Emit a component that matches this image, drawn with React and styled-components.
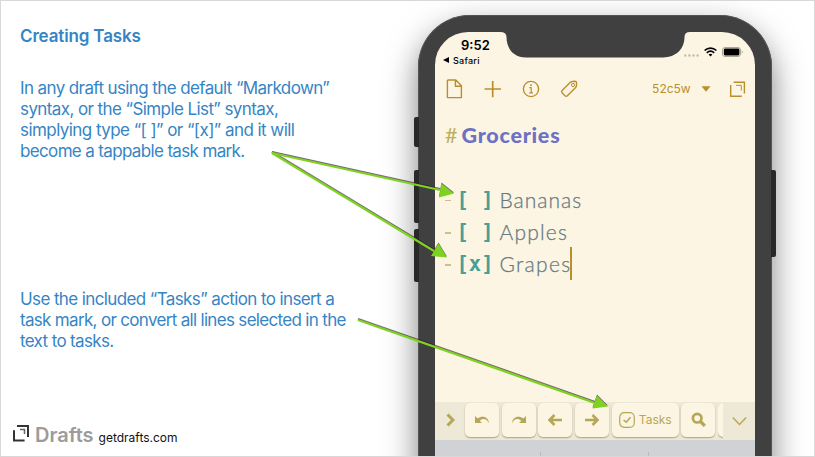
import React from 'react';
import styled, { createGlobalStyle } from 'styled-components';

const GlobalStyle = createGlobalStyle`
  * { box-sizing: border-box; }
  body { margin: 0; background: #fff; }
`;

const Slide = styled.main`
  position: relative;
  display: grid;
  grid-template-columns: 417px 353.6px;
  grid-template-rows: 455px;
  width: 815px;
  height: 457px;
  overflow: hidden;
  border: 1px solid #d8d8d8;
  background: #fff;
  font-family: Inter, 'Liberation Sans', sans-serif;
`;

const Notes = styled.section`
  position: relative;
  z-index: 1;
  display: flex;
  flex-direction: column;
  padding: 24px 0 9px 19px;
  color: #3585c5;
`;

const Title = styled.h1`
  margin: 0 0 31px;
  font-size: 17px;
  font-weight: 600;
  line-height: 22px;
  letter-spacing: -0.15px;
`;

const Paragraph = styled.div`
  margin-bottom: ${(p) => p.$gap}px;
  font-size: 17px;
  line-height: 21px;
`;

const Line = styled.div`
  white-space: pre;
  letter-spacing: ${(p) => p.$track}px;
`;

const Brand = styled.footer`
  display: flex;
  align-items: baseline;
  margin: auto 0 0 -8px;
`;

const BrandName = styled.span`
  margin: 0 5px 0 5px;
  color: #9b9b9b;
  font-size: 20px;
  font-weight: 600;
  line-height: 24px;
`;

const Site = styled.span`
  color: #111;
  font-size: 12px;
`;

const Phone = styled.section`
  position: relative;
  height: 500px;
  margin-top: 14.4px;
  padding: 16.6px 16.4px 0 17px;
  border-radius: 52px 52px 0 0;
  background: #404040;
  box-shadow: inset 0 0 0 0.8px #5a5a5a, 0 14px 32px rgba(0, 0, 0, 0.5);
`;

const SideKey = styled.i`
  position: absolute;
  top: ${(p) => p.$top}px;
  ${(p) => (p.$right ? 'right: -4px;' : 'left: -4px;')}
  width: 5px;
  height: ${(p) => p.$length}px;
  border-radius: ${(p) => (p.$right ? '0 2px 2px 0' : '2px 0 0 2px')};
  background: #292929;
`;

const Screen = styled.div`
  position: relative;
  display: flex;
  flex-direction: column;
  height: 480px;
  overflow: hidden;
  border-radius: 33px 33px 0 0;
  background: #fcf5e3;
`;

const Notch = styled.svg`
  position: absolute;
  top: -1px;
  left: 65px;
  width: 190px;
  height: 27px;
`;

const StatusBar = styled.header`
  display: flex;
  justify-content: space-between;
  height: 38px;
  padding: 5px 12px 0 8px;
  color: #000;
`;

const Clock = styled.div`
  padding-left: 18px;
  font-size: 13px;
  font-weight: 600;
  line-height: 16px;
`;

const BackLink = styled.div`
  display: flex;
  align-items: center;
  gap: 4px;
  font-size: 9px;
  font-weight: 500;
  line-height: 15px;
  letter-spacing: 0.25px;
`;

const Indicators = styled.div`
  display: flex;
  align-items: center;
  height: 14px;
  margin-top: 8px;
  gap: 5px;
`;

const Dots = styled.svg`
  align-self: flex-end;
  margin-bottom: 2px;
`;

const Toolbar = styled.nav`
  display: flex;
  align-items: center;
  height: 38px;
  padding: 0 8px 0 10px;
  color: #b98f2c;
`;

const ToolIcon = styled.svg`
  flex: none;
  width: 20px;
  height: 20px;
  margin-right: ${(p) => p.$gap || 0}px;
  fill: none;
  stroke: currentColor;
  stroke-width: 1.4;
`;

const WordCount = styled.span`
  margin: 0 10px 0 auto;
  font-size: 12px;
`;

const Caret = styled.svg`
  margin-right: 16.5px;
`;

const Editor = styled.article`
  flex: none;
  height: 294px;
  padding: 11px 0 0 10px;
  color: #657a81;
  font-family: Lato, sans-serif;
  font-size: 21px;
  line-height: 32.2px;
`;

const Heading = styled.h2`
  display: flex;
  margin: 0 0 32.4px;
  color: #6c71c4;
  font-size: 21.5px;
  font-weight: 900;
  line-height: 32.2px;
  letter-spacing: 0.75px;
`;

const Hash = styled.span`
  width: 16.5px;
  color: #bdb05e;
  font-weight: 400;
  letter-spacing: 0;
`;

const Task = styled.div`
  display: flex;
  align-items: center;
  height: 32.2px;
`;

const Dash = styled.i`
  width: 6px;
  height: 1.5px;
  margin-right: 5.5px;
  background: #cbc287;
  position: relative;
  top: 1px;
`;

const Mark = styled.span`
  margin-right: 6px;
  color: #46a097;
  font-family: 'DejaVu Sans Mono', monospace;
  font-size: 20.5px;
  font-weight: 700;
  white-space: pre;
`;

const Cursor = styled.i`
  width: 2px;
  height: 33px;
  margin-left: -1px;
  background: #b98f2c;
  position: relative;
  top: -1px;
`;

const Entry = styled(Line)`
  font-weight: 300;
  -webkit-text-stroke: 0.25px currentColor;
`;

const ActionBar = styled.div`
  display: flex;
  flex: none;
  align-items: flex-start;
  height: 38px;
  padding-top: 1px;
  background: #eee8d6;
  color: #b5a755;
`;

const Key = styled.button`
  display: flex;
  flex: none;
  align-items: center;
  justify-content: center;
  gap: 4px;
  width: ${(p) => p.$width || 34}px;
  height: 34px;
  margin: 0 2.7px 0 0;
  padding: 0;
  border: 0;
  border-radius: 5px;
  background: #fcf5e3;
  box-shadow: 0 1px 1.5px rgba(100, 90, 60, 0.5);
  color: inherit;
  font: 400 12px Inter, sans-serif;
`;

const KeyClip = styled.div`
  flex: none;
  width: 5px;
  height: 36px;
  overflow: hidden;
`;

const BarEnd = styled.div`
  display: flex;
  align-items: center;
  justify-content: center;
  width: ${(p) => p.$width}px;
  height: ${(p) => p.$height || 34}px;
`;

const Glyph = styled.svg`
  flex: none;
  fill: none;
  stroke: currentColor;
  stroke-width: ${(p) => p.$weight || 3};
`;

const Keyboard = styled.div`
  display: flex;
  flex: none;
  justify-content: space-between;
  height: 40px;
  padding: 12px 106px 0 105px;
  background: #d1d2d5;
`;

const Divider = styled.i`
  width: 1px;
  height: 6px;
  background: #bbbcc0;
`;

const Arrows = styled.svg`
  position: absolute;
  z-index: 2;
  top: -1px;
  left: -1px;
  filter: drop-shadow(0 -1px 0.5px rgba(50, 20, 50, 0.65));
`;

const intro = [
  ['In any draft using the default “Markdown”', -0.61],
  ['syntax, or the “Simple List” syntax,', -0.59],
  ['simplying type “[ ]” or “[x]” and it will', -0.56],
  ['become a tappable task mark.', -0.65],
];

const usage = [
  ['Use the included “Tasks” action to insert a', -0.61],
  ['task mark, or convert all lines selected in the', -0.68],
  ['text to tasks.', -0.65],
];

const tasks = [
  { name: 'Bananas', mark: '[ ]', track: 1 },
  { name: 'Apples', mark: '[ ]', track: 1.2 },
  { name: 'Grapes', mark: '[x]', track: 1.3, active: true },
];

const arrows = [
  { from: [272, 153], base: [440, 190], tip: '454,193.5 441.5,183.5 439,197.5' },
  { from: [272, 153], base: [434, 251], tip: '447,257.5 438.5,243.5 431,256' },
  { from: [358, 320], base: [595, 403], tip: '608,406.5 597,395.5 592.5,408.5' },
];

function Lines({ items }) {
  return items.map(([text, track]) => (
    <Line key={text} $track={track}>{text}</Line>
  ));
}

function DraftsLogo() {
  return (
    <svg width="18" height="17" viewBox="0 0 18 17" fill="none" stroke="#333">
      <path d="M2 5.2V15.6H12.6" strokeWidth="2" />
      <path d="M5 1.1H16V12" strokeWidth="2" />
      <path d="M8 4.5H12.5V9" strokeWidth="1.5" stroke="#666" />
    </svg>
  );
}

function Status() {
  return (
    <StatusBar>
      <div>
        <Clock>9:52</Clock>
        <BackLink>
          <svg width="6" height="6" viewBox="0 0 6 6"><path d="M0 3L6 0V6Z" /></svg>
          Safari
        </BackLink>
      </div>
      <Indicators>
        <Dots width="15" height="3" fill="#c3bda9">
          <circle cx="1.3" cy="1.5" r="1.2" />
          <circle cx="5.4" cy="1.5" r="1.2" />
          <circle cx="9.5" cy="1.5" r="1.2" />
          <circle cx="13.6" cy="1.5" r="1.2" />
        </Dots>
        <svg width="13" height="10" viewBox="0 0 13 10" fill="none" stroke="#000" strokeWidth="1.7">
          <path d="M.6 3.5C4 .2 9 .2 12.4 3.5" />
          <path d="M2.8 5.9C5 3.9 8 3.9 10.2 5.9" />
          <path d="M4.6 7.5L6.5 9.6L8.4 7.5C7.3 6.6 5.7 6.6 4.6 7.5Z" fill="#000" stroke="none" />
        </svg>
        <svg width="21" height="10" viewBox="0 0 21 10">
          <rect x=".5" y=".5" width="18" height="9" rx="2.5" fill="none" stroke="#aaa595" />
          <rect x="1.8" y="1.6" width="15.6" height="6.8" rx="1.3" />
          <path d="M19.7 3.3C21 4 21 6 19.7 6.7Z" fill="#aaa595" />
        </svg>
      </Indicators>
    </StatusBar>
  );
}

function Tools() {
  return (
    <Toolbar>
      <ToolIcon $gap={18} viewBox="0 0 20 20" strokeLinejoin="round">
        <path d="M3.2 1H10.8L16.4 6.8V18.6H2.4V1.8Q2.4 1 3.2 1ZM10.4 1V7.2H16.4" />
      </ToolIcon>
      <ToolIcon $gap={18} viewBox="0 0 20 20">
        <path d="M1.5 10H18M9.7 2V18.2" strokeWidth="1.7" />
      </ToolIcon>
      <ToolIcon $gap={18} viewBox="0 0 20 20">
        <circle cx="10" cy="10" r="7.6" />
        <path d="M8.4 8.6H10.2V13.6M8.2 13.9H12" strokeWidth="1.2" />
        <circle cx="10" cy="6.1" r=".6" fill="currentColor" strokeWidth=".8" />
      </ToolIcon>
      <ToolIcon viewBox="0 0 20 20" strokeLinejoin="round">
        <path d="M11.4 3.2Q12.2 2.5 13.2 2.5L16 2.3Q17.7 2.4 17.6 4.2L17.4 7Q17.3 7.9 16.6 8.6L8.4 16.7Q7.2 17.8 6 16.7L3.1 13.8Q2 12.5 3.1 11.4Z" />
        <circle cx="14" cy="6" r="1.6" strokeWidth="1" />
      </ToolIcon>
      <WordCount>52c5w</WordCount>
      <Caret width="10" height="6" fill="currentColor"><path d="M.5 .3H9.500L5 5.8Z" /></Caret>
      <ToolIcon viewBox="0 0 20 20">
        <path d="M3.7 6V17.3H14.8M6.6 3.3H17.4V14.5" />
        <path d="M9 6.3H14.3V11.6" strokeWidth="1" />
      </ToolIcon>
    </Toolbar>
  );
}

function Actions() {
  return (
    <ActionBar>
      <BarEnd $width={30}>
        <Glyph width="9" height="14"><path d="M1.500 1.5L7 7L1.5 12.5" /></Glyph>
      </BarEnd>
      <Key>
        <Glyph width="16" height="11" viewBox="0 0 16 11" $weight={1}>
          <path d="M1 2V9H8L5.7 6.7C9 3.7 13 4.7 14.9 9.2C15 3.5 8.6 .5 3.7 4.5Z" fill="currentColor" stroke="none" />
        </Glyph>
      </Key>
      <Key>
        <Glyph width="16" height="11" viewBox="0 0 16 11" $weight={1}>
          <path d="M15 2V9H8L10.3 6.7C7 3.7 3 4.7 1.1 9.2C1 3.5 7.4 .5 12.3 4.5Z" fill="currentColor" stroke="none" />
        </Glyph>
      </Key>
      <Key>
        <Glyph width="16" height="12" $weight={2.6}><path d="M15 6H3M7.5 1L2.5 6L7.5 11" /></Glyph>
      </Key>
      <Key>
        <Glyph width="16" height="12" $weight={2.6}><path d="M1 6H13M8.5 1L13.5 6L8.5 11" /></Glyph>
      </Key>
      <Key $width={67}>
        <Glyph width="16" height="16" $weight={1.2}>
          <rect x=".7" y=".7" width="14.6" height="14.6" rx="4.5" />
          <path d="M4.6 8L7.2 10.2L11.5 5.2" strokeWidth="1.6" />
        </Glyph>
        Tasks
      </Key>
      <Key>
        <Glyph width="15" height="15" $weight={2.7}>
          <circle cx="6.2" cy="6.2" r="4.3" />
          <path d="M9.5 9.5L13.8 13.8" strokeWidth="3.2" />
        </Glyph>
      </Key>
      <KeyClip><Key /></KeyClip>
      <BarEnd $width={32} $height={37}>
        <Glyph width="15" height="10" $weight={1.4}><path d="M.8 1.5L7.5 8.5L14.2 1.5" /></Glyph>
      </BarEnd>
    </ActionBar>
  );
}

export default function App() {
  return (
    <>
      <GlobalStyle />
      <Slide>
        <Notes>
          <Title>Creating Tasks</Title>
          <Paragraph $gap={127}><Lines items={intro} /></Paragraph>
          <Paragraph $gap={0}><Lines items={usage} /></Paragraph>
          <Brand>
            <DraftsLogo />
            <BrandName>Drafts</BrandName>
            <Site>getdrafts.com</Site>
          </Brand>
        </Notes>
        <Phone>
          <SideKey $top={101.5} $length={30} />
          <SideKey $top={155} $length={53} />
          <SideKey $top={214} $length={53} />
          <SideKey $right $top={155} $length={87} />
          <Screen>
            <Notch viewBox="0 0 190 27">
              <path d="M0 0V1Q6.5 1 6.5 6C6.5 18 14 26.4 26 26.4H163C176 26.4 184.5 18 184.5 6Q184.5 1 190 1V0Z" fill="#404040" />
            </Notch>
            <Status />
            <Tools />
            <Editor>
              <Heading><Hash>#</Hash>Groceries</Heading>
              {tasks.map((task) => (
                <Task key={task.name}>
                  <Dash />
                  <Mark>{task.mark}</Mark>
                  <Entry $track={task.track}>{task.name}</Entry>
                  {task.active && <Cursor />}
                </Task>
              ))}
            </Editor>
            <Actions />
            <Keyboard><Divider /><Divider /></Keyboard>
          </Screen>
        </Phone>
        <Arrows width="815" height="457" fill="#7ed321" stroke="#7ed321">
          {arrows.map(({ from, base, tip }) => (
            <g key={tip}>
              <line x1={from[0]} y1={from[1]} x2={base[0]} y2={base[1]} strokeWidth="2.2" />
              <polygon points={tip} stroke="none" />
            </g>
          ))}
        </Arrows>
      </Slide>
    </>
  );
}
